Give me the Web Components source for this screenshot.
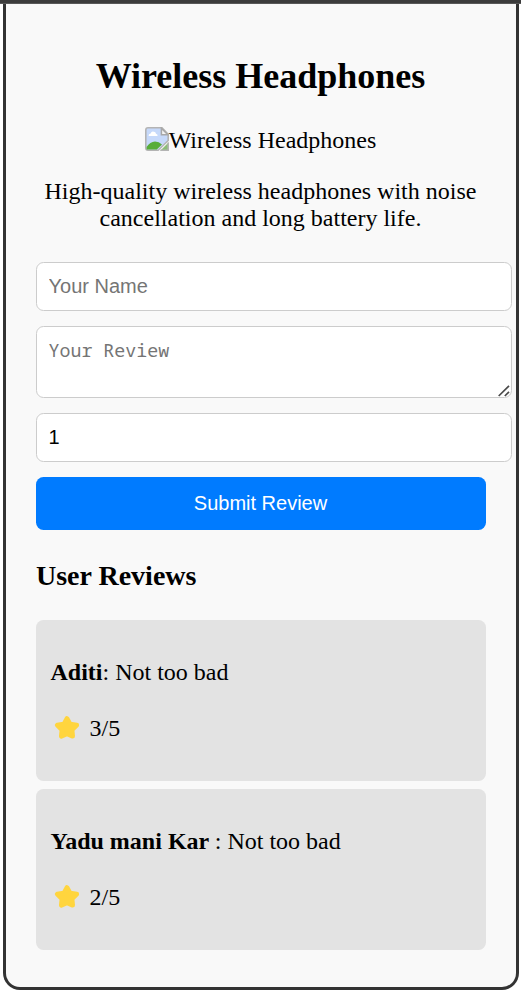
<!DOCTYPE html>
<html lang="en">
<head>
<meta charset="utf-8">
<title>Wireless Headphones</title>
<style>
html,body{margin:0;height:992px;overflow:hidden;background:#fff;font:24px/27px "Liberation Serif",serif;color:#000}
</style>
</head>
<body>
<product-page></product-page>
<script>
const define=(name,html,setup)=>{
  const t=document.createElement('template');t.innerHTML=html;
  customElements.define(name,class extends HTMLElement{
    constructor(){super();this.attachShadow({mode:'open'}).append(t.content.cloneNode(true));}
    connectedCallback(){if(setup)setup(this,this.shadowRoot);}
  });
};

define('broken-image',`<style>
:host{display:flex;justify-content:center;align-items:flex-start;height:27px}
svg{width:24px;height:24px;flex:none}
span{margin-right:1px}
</style>
<svg viewBox="0 0 24 24">
<path d="M3 .8H17L23.2 7.2V13.5L13.2 23.2H3Q.8 23.2 .8 21V3Q.8 .8 3 .8Z" fill="#c6d9fa" stroke="#b4b4b4" stroke-width="1.6"/>
<path d="M3.6 9Q3.4 6.8 5.6 6.6Q6.6 3.6 9 4.8Q10.6 5 11 6.8Q12.8 7 12.6 9Z" fill="#fff"/>
<path d="M1.6 20Q5 14.6 10 14.4Q14 14.5 17 17.6L11.8 22.4H1.6Z" fill="#58ad38"/>
<path d="M16.4 1.2V7.8H22.8Z" fill="#f4f4f4" stroke="#a8a8a8" stroke-width="1.5"/>
<path d="M23.8 15.2V23.8H15.2Z" fill="#8cbd78"/><path d="M23.2 15.6V23.2H15.4" fill="none" stroke="#b4b4b4" stroke-width="1.5"/>
</svg><span><slot></slot></span>`);

define('form-field',`<style>
:host{display:block;width:476px;margin-bottom:15px}
input,textarea{display:block;box-sizing:border-box;width:100%;margin:0;border:1px solid #ccc;border-radius:7.5px;background:#fff;color:#000;padding:11px 11.5px;outline:0}
input{height:49px;font:20px "Liberation Sans",Arial,sans-serif}
textarea{height:72px;font:18.3px/24px "Noto Sans Mono","DejaVu Sans Mono",monospace;resize:none;overflow:hidden;padding-top:11px}
::placeholder{color:#757575;opacity:1}
.wrap{position:relative}
svg{position:absolute;right:2px;bottom:1px;width:12px;height:12px}
</style><div class="wrap"></div>`,(el,root)=>{
  const area=el.hasAttribute('multiline'),w=root.querySelector('.wrap');
  const c=document.createElement(area?'textarea':'input');
  c.placeholder=el.getAttribute('placeholder')||'';
  c.value=el.getAttribute('value')||'';
  w.replaceChildren(c);
  if(area)w.insertAdjacentHTML('beforeend','<svg viewBox="0 0 12 12"><path d="M.7 11L11 .9M6.8 11L11 6.9" stroke="#4a4a4a" stroke-width="1.7" fill="none"/></svg>');
});

define('submit-button',`<style>
:host{display:block}
button{display:block;width:100%;height:53px;border:0;border-radius:7.5px;background:#007bff;color:#fff;font:20px "Liberation Sans",Arial,sans-serif;padding:0 1px 0 0}
</style><button type="button"><slot></slot></button>`);

define('star-rating',`<style>
:host{display:flex;height:32px;align-items:flex-start}
svg{width:32px;height:32px;margin-right:6.5px;flex:none}
span{padding-top:5px}
</style><svg viewBox="0 0 32 32"><path d="M16 8.4L19 13.9L25.8 15.1L21.1 19.9L21.7 26.3L16 23.9L10.3 26.3L10.9 19.9L6.2 15.1L13 13.9Z" fill="#ffd53e" stroke="#ffd53e" stroke-width="4.6" stroke-linejoin="round"/></svg><span><slot></slot></span>`);

define('review-card',`<style>
:host{display:block;box-sizing:border-box;height:161px;padding:39px 15px;background:#e3e3e3;border-radius:7.5px}
p{margin:0 0 24px -.5px;white-space:pre}
b{font-weight:700}
</style><p><b><slot name="author"></slot></b>: <slot></slot></p><star-rating><slot name="rating"></slot></star-rating>`);

define('product-card',`<style>
:host{display:block;box-sizing:border-box;width:516px;height:986px;margin-left:3px;padding:32px 30px 0;border:3px solid #333;border-top:0;border-radius:0 0 17px 17px;background:#f9f9f9}
</style><slot></slot>`);

define('product-page',`<style>
:host{display:block}
.bar{height:3px;background:#3c3c3c;border-bottom:1px solid #585858}
h1{margin:20px 1px 30px 0;font-size:36px;line-height:41px;text-align:center}
.desc{margin:24px 1px 30px 0;text-align:center}
h3{margin:30px 0 28px;font-size:28px;line-height:32px}
.reviews{display:grid;gap:8px}
</style>
<div class="bar"></div>
<product-card>
<h1>Wireless Headphones</h1>
<broken-image>Wireless Headphones</broken-image>
<p class="desc">High-quality wireless headphones with noise cancellation and long battery life.</p>
<form-field placeholder="Your Name"></form-field>
<form-field multiline placeholder="Your Review"></form-field>
<form-field value="1"></form-field>
<submit-button>Submit Review</submit-button>
<h3>User Reviews</h3>
<div class="reviews">
<review-card><span slot="author">Aditi</span>Not too bad<span slot="rating">3/5</span></review-card>
<review-card><span slot="author">Yadu mani Kar </span>Not too bad<span slot="rating">2/5</span></review-card>
</div>
</product-card>`);
</script>
</body>
</html>
